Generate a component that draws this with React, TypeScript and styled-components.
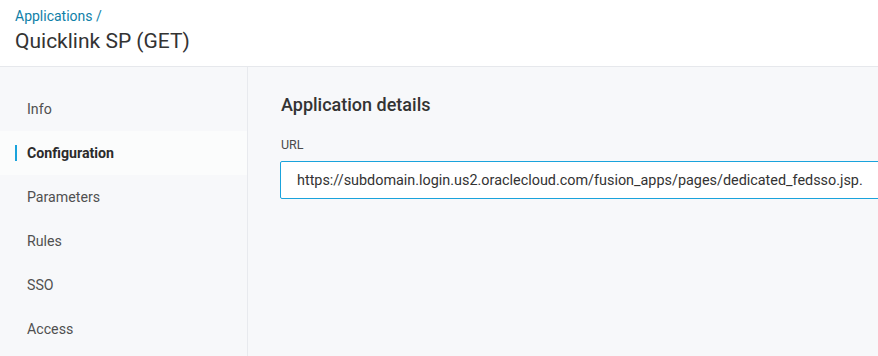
import React from "react";
import styled, { createGlobalStyle } from "styled-components";

const GlobalStyle = createGlobalStyle`
  html, body {
    margin: 0;
    padding: 0;
    background: #f7f8fa;
    font-family: Roboto, "Liberation Sans", sans-serif;
    overflow: hidden;
  }
`;

const Page = styled.div`
  width: 878px;
  height: 356px;
  display: flex;
  flex-direction: column;
`;

const Header = styled.header`
  background: #fff;
  border-bottom: 1px solid #e6e8ec;
  padding: 8px 15px 0;
  box-sizing: border-box;
  height: 67px;
`;

const Crumb = styled.a`
  display: block;
  color: #0f7fa8;
  font-size: 14px;
  line-height: 17px;
  text-decoration: none;
`;

const Title = styled.h1`
  margin: 3px 0 0;
  font-size: 21px;
  font-weight: 400;
  line-height: 26px;
  color: #333;
`;

const Body = styled.div`
  flex: 1;
  display: flex;
`;

const Sidebar = styled.nav`
  width: 247px;
  flex-shrink: 0;
  border-right: 1px solid #e8eaee;
  background: #f7f8fa;
  padding-top: 20px;
`;

const NavItem = styled.div<{ $active?: boolean }>`
  position: relative;
  height: 44px;
  display: flex;
  align-items: center;
  padding-left: 27px;
  font-size: 14.2px;
  color: ${({ $active }) => ($active ? "#2b2b2b" : "#505050")};
  font-weight: ${({ $active }) => ($active ? 700 : 400)};
  background: ${({ $active }) => ($active ? "#fbfcfc" : "transparent")};
  &::before {
    content: "";
    display: ${({ $active }) => ($active ? "block" : "none")};
    position: absolute;
    left: 15px;
    top: 14px;
    width: 2px;
    height: 16px;
    background: #1aa3dc;
  }
`;

const Main = styled.main`
  flex: 1;
  padding: 28px 0 0 33px;
  min-width: 0;
`;

const Heading = styled.h2`
  margin: 0;
  font-size: 18px;
  font-weight: 500;
  line-height: 20px;
  color: #333;
`;

const Label = styled.div`
  margin-top: 22px;
  font-size: 12.5px;
  color: #4a4a4a;
  line-height: 15px;
`;

const Input = styled.input`
  display: block;
  margin: 9px 0 0 -1px;
  width: 640px;
  height: 38px;
  box-sizing: border-box;
  border: 1px solid #1aa3dc;
  border-radius: 2px;
  background: #fff;
  padding: 0 0 0 16px;
  font-family: Roboto, "Liberation Sans", sans-serif;
  font-size: 14.4px;
  color: #333;
  outline: none;
`;

const items = ["Info", "Configuration", "Parameters", "Rules", "SSO", "Access"];

export default function App() {
  return (
    <Page>
      <GlobalStyle />
      <Header>
        <Crumb href="#">Applications /</Crumb>
        <Title>Quicklink SP (GET)</Title>
      </Header>
      <Body>
        <Sidebar>
          {items.map((it) => (
            <NavItem key={it} $active={it === "Configuration"}>
              {it}
            </NavItem>
          ))}
        </Sidebar>
        <Main>
          <Heading>Application details</Heading>
          <Label>URL</Label>
          <Input
            readOnly
            value="https://subdomain.login.us2.oraclecloud.com/fusion_apps/pages/dedicated_fedsso.jsp."
          />
        </Main>
      </Body>
    </Page>
  );
}
